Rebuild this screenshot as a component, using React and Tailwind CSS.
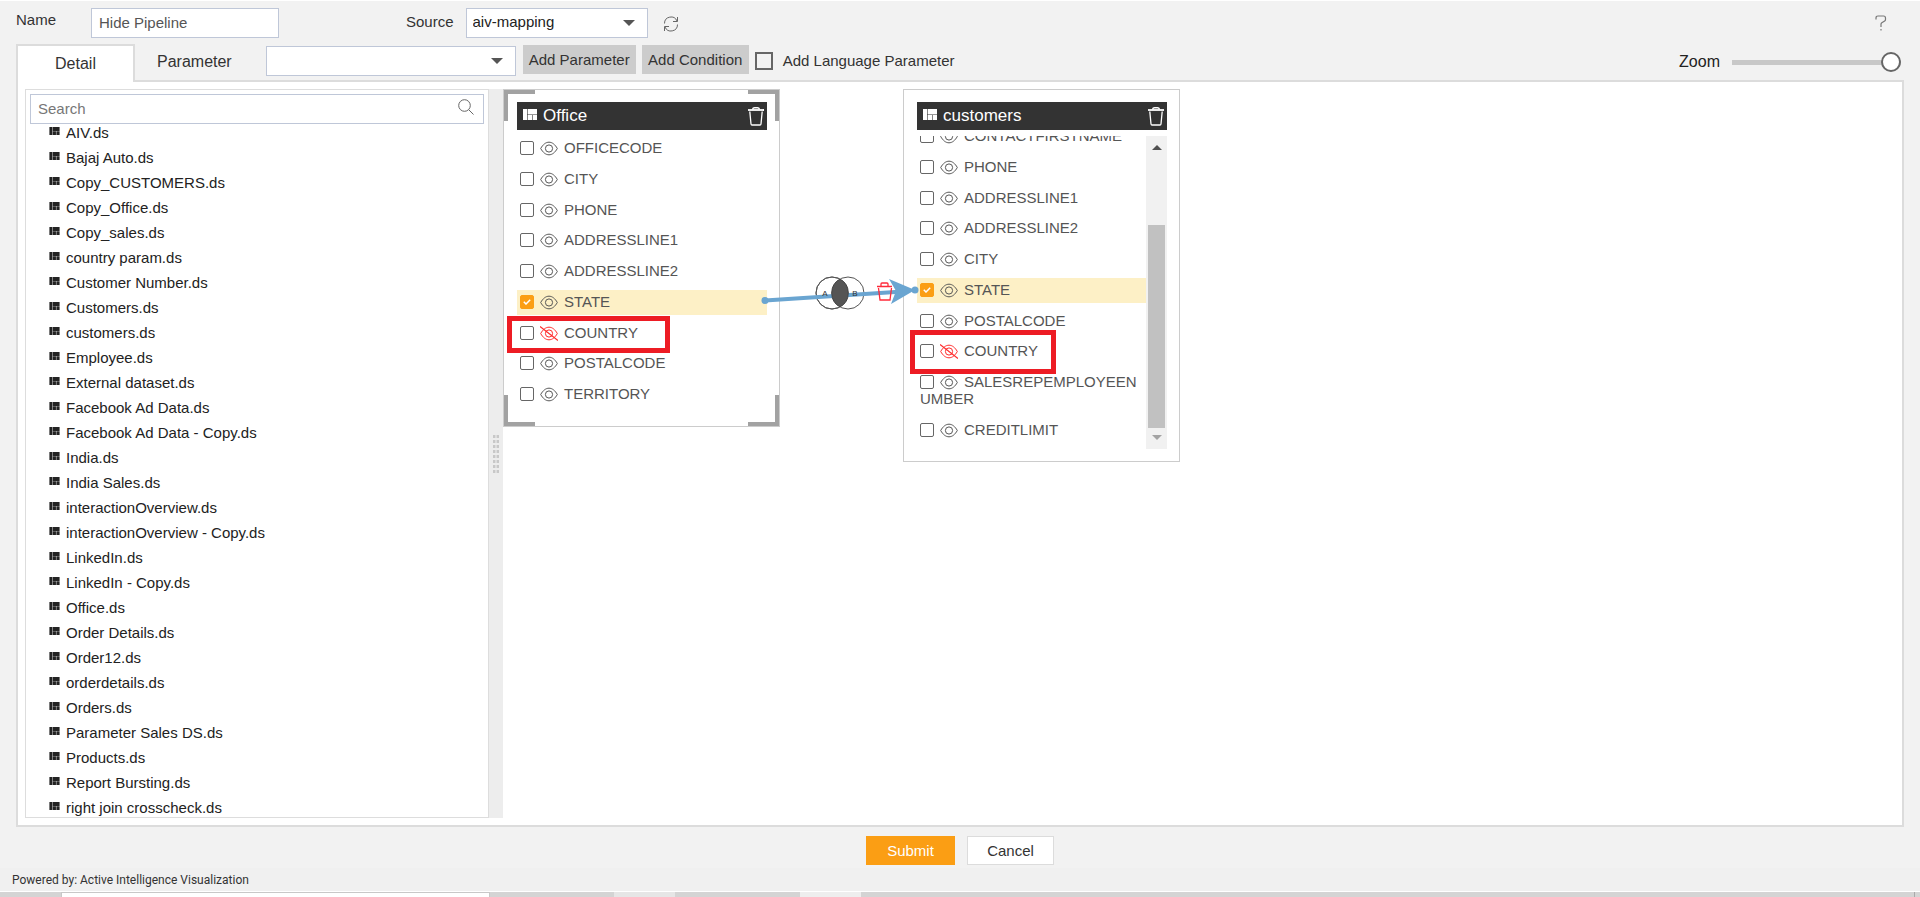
import { useState } from 'react';

const DATASETS = [
  'AIV.ds', 'Bajaj Auto.ds', 'Copy_CUSTOMERS.ds', 'Copy_Office.ds', 'Copy_sales.ds',
  'country param.ds', 'Customer Number.ds', 'Customers.ds', 'customers.ds', 'Employee.ds',
  'External dataset.ds', 'Facebook Ad Data.ds', 'Facebook Ad Data - Copy.ds', 'India.ds',
  'India Sales.ds', 'interactionOverview.ds', 'interactionOverview - Copy.ds', 'LinkedIn.ds',
  'LinkedIn - Copy.ds', 'Office.ds', 'Order Details.ds', 'Order12.ds', 'orderdetails.ds',
  'Orders.ds', 'Parameter Sales DS.ds', 'Products.ds', 'Report Bursting.ds',
  'right join crosscheck.ds',
];

const OFFICE_FIELDS = [
  { name: 'OFFICECODE' },
  { name: 'CITY' },
  { name: 'PHONE' },
  { name: 'ADDRESSLINE1' },
  { name: 'ADDRESSLINE2' },
  { name: 'STATE', joined: true },
  { name: 'COUNTRY', hidden: true },
  { name: 'POSTALCODE' },
  { name: 'TERRITORY' },
];

const CUSTOMER_FIELDS = [
  { name: 'CONTACTFIRSTNAME' },
  { name: 'PHONE' },
  { name: 'ADDRESSLINE1' },
  { name: 'ADDRESSLINE2' },
  { name: 'CITY' },
  { name: 'STATE', joined: true },
  { name: 'POSTALCODE' },
  { name: 'COUNTRY', hidden: true },
  { name: 'SALESREPEMPLOYEENUMBER' },
  { name: 'CREDITLIMIT' },
];

/* ---------- Icons ---------- */

function DatasetIcon({ className }) {
  return (
    <svg viewBox="0 0 14 11" className={className} fill="currentColor" aria-hidden="true">
      <path d="M0 0h4v11H0zM4.600 0H14v5.400H4.600zM4.600 6h4.400v5H4.600zM9.600 6H14v5H9.600z" />
    </svg>
  );
}

function TrashIcon({ className }) {
  return (
    <svg viewBox="0 0 16 19" className={className} fill="none" stroke="currentColor" aria-hidden="true">
      <path d="M0 3h16" strokeWidth="1.8" />
      <path d="M4.500 2.500Q5 .8 6.500.8h3q1.500 0 2 1.700" strokeWidth="1.5" />
      <path d="M1.800 4.500 3 17q.1 1 1 1h8q.9 0 1-1l1.200-12.500" strokeWidth="1.3" />
    </svg>
  );
}

function EyeIcon({ off }) {
  return (
    <svg
      viewBox="0 0 18 15"
      className={`inline-block w-[18px] h-[15px] ml-[6px] mr-[6px] align-[-3px] ${off ? 'text-[#ff2a2a]' : 'text-[#555]'}`}
      fill="none"
      stroke="currentColor"
      aria-hidden="true"
    >
      <path d="M.7 7.500C3 3.400 5.800 1.200 9 1.200s6 2.200 8.300 6.300c-2.300 4.100-5.100 6.300-8.300 6.300S3 11.600.7 7.500z" />
      <circle cx="9" cy="7.500" r="3.600" />
      {off && <path d="M0 .5l18 14" strokeWidth="1.200" />}
    </svg>
  );
}

function Caret({ className }) {
  return (
    <svg viewBox="0 0 12 6" className={className} fill="currentColor" aria-hidden="true">
      <path d="M0 0h12L6 6z" />
    </svg>
  );
}

/* ---------- Form bits ---------- */

function SelectBox({ label, options, className }) {
  return (
    <div className={`relative h-[30px] ${className}`}>
      <select
        aria-label={label}
        className="w-full h-full px-[6px] appearance-none bg-white border border-[#bfc7d8] text-[15px] text-[#222] outline-none"
      >
        {options.map((o) => <option key={o}>{o}</option>)}
      </select>
      <Caret className="absolute right-[13px] top-3 w-3 h-[6px] text-[#555] pointer-events-none" />
    </div>
  );
}

function FieldRow({ field }) {
  const [checked, setChecked] = useState(Boolean(field.joined));

  return (
    <li className={`pl-[3px] pt-[3px] pb-[5px] break-all ${field.joined ? 'bg-[#fdf0c6]' : ''}`}>
      <label className="block">
        <span className="inline-grid place-items-center align-[-2px]">
          <input
            type="checkbox"
            checked={checked}
            onChange={(e) => setChecked(e.target.checked)}
            className="col-start-1 row-start-1 w-[14px] h-[14px] appearance-none bg-white border border-[#666] rounded-[2px] checked:bg-[#fb9e14] checked:border-[#fb9e14]"
          />
          {checked && (
            <svg viewBox="0 0 8 6" className="col-start-1 row-start-1 w-2 h-[6px] pointer-events-none" fill="none" stroke="#fff" strokeWidth="1.500" aria-hidden="true">
              <path d="M.8 2.800 3 5l4.200-4.200" />
            </svg>
          )}
        </span>
        <EyeIcon off={field.hidden} />
        {field.name}
      </label>
    </li>
  );
}

function NodeHeader({ title }) {
  return (
    <div className="flex items-center h-7 pl-[6px] pr-[3px] bg-[#333] text-white">
      <DatasetIcon className="w-[14px] h-[11px] mb-1" />
      <h2 className="flex-1 ml-[6px] text-[17px]">{title}</h2>
      <button type="button" aria-label={`Remove ${title}`}>
        <TrashIcon className="w-4 h-[19px]" />
      </button>
    </div>
  );
}

/* ---------- Canvas ---------- */

function OfficeNode() {
  return (
    <section className="absolute left-0 top-0 w-[277px] pl-[13px] pr-3 pt-3 pb-[19px] bg-white border border-[#ccc]">
      {/* Selection corners */}
      <div className="absolute left-0 top-0 w-[31px] h-[31px] border-l-4 border-t-4 border-[#a2a2a2] pointer-events-none" />
      <div className="absolute right-0 top-0 w-[31px] h-[31px] border-r-4 border-t-4 border-[#a2a2a2] pointer-events-none" />
      <div className="absolute left-0 bottom-0 w-[31px] h-[31px] border-l-4 border-b-4 border-[#a2a2a2] pointer-events-none" />
      <div className="absolute right-0 bottom-0 w-[31px] h-[31px] border-r-4 border-b-4 border-[#a2a2a2] pointer-events-none" />

      <NodeHeader title="Office" />
      <ul className="flex flex-col justify-between h-[271px] mt-[6px] text-[15px] leading-[17px] text-[#555]">
        {OFFICE_FIELDS.map((f) => <FieldRow key={f.name} field={f} />)}
      </ul>
    </section>
  );
}

function CustomersNode() {
  return (
    <section className="absolute left-[400px] top-0 w-[277px] pl-[13px] pr-3 pt-3 pb-3 bg-white border border-[#ccc]">
      <NodeHeader title="customers" />
      <div className="flex h-[313px] mt-[6px] overflow-hidden">
        <ul className="flex-1 flex flex-col justify-between h-[319px] -mt-3 text-[15px] leading-[17px] text-[#555]">
          {CUSTOMER_FIELDS.map((f) => <FieldRow key={f.name} field={f} />)}
        </ul>
        {/* Scrollbar */}
        <div className="flex flex-col items-center w-[21px] py-[9px] bg-[#f1f1f1]">
          <Caret className="w-[10px] h-[5px] rotate-180 text-[#505050]" />
          <div className="w-[17px] h-[203px] mt-auto mb-[7px] bg-[#c1c1c1]" />
          <Caret className="w-[10px] h-[5px] text-[#a3a3a3]" />
        </div>
      </div>
    </section>
  );
}

function JoinLink() {
  return (
    <svg viewBox="0 0 420 230" className="absolute left-0 top-0 w-[420px] h-[230px] pointer-events-none">
      <g fill="none" stroke="#555">
        <circle cx="329" cy="204" r="16" fill="#fff" />
        <circle cx="345" cy="204" r="16" fill="#fff" />
        <circle cx="329" cy="204" r="16" />
      </g>
      <path d="M262 211.500 400 202.500" stroke="#6aa5d1" strokeWidth="4" />
      <path d="M337 190a16 16 0 0 1 0 28a16 16 0 0 1 0-28z" fill="#555" stroke="#444" />
      <g fontFamily="Liberation Sans, sans-serif" fontSize="8" fill="#333" textAnchor="middle">
        <text x="322" y="207">A</text>
        <text x="352" y="207">B</text>
      </g>
      <g fill="none" stroke="#ff2a3a" strokeWidth="1.300">
        <path d="M374 197.500h15M378 197v-2q0-1 1-1h5q1 0 1 1v2M375.500 199l1.500 12h10l1.500-12" />
      </g>
      <g fill="#6aa5d1">
        <circle cx="262" cy="211.500" r="3.500" />
        <path d="M386 190 412 201 388 215 393 202z" />
        <circle cx="412" cy="201" r="3.500" />
      </g>
    </svg>
  );
}

/* ---------- Page ---------- */

export default function App() {
  const [name, setName] = useState('Hide Pipeline');
  const [search, setSearch] = useState('');
  const [zoom, setZoom] = useState(100);

  const visible = DATASETS.filter((d) => d.toLowerCase().includes(search.toLowerCase()));

  return (
    <div className="flex flex-col h-screen bg-[#f2f2f2] border-t border-white font-['Liberation_Sans',Arial,sans-serif] text-[15px] text-[#333]">
      {/* Top bar */}
      <header className="flex items-center h-[43px] px-4">
        <label htmlFor="name" className="w-[75px] pb-1">Name</label>
        <input
          id="name"
          value={name}
          onChange={(e) => setName(e.target.value)}
          className="w-[188px] h-[30px] px-[7px] bg-white border border-[#bfc7d8] text-[#555] outline-none"
        />
        <span className="ml-[127px] mr-3">Source</span>
        <SelectBox label="Source" options={['aiv-mapping']} className="w-[182px]" />
        <button type="button" aria-label="Refresh" className="ml-[15px] mt-[2px] text-[#666]">
          <svg viewBox="0 0 16 16" className="w-4 h-4" fill="none" stroke="currentColor" aria-hidden="true">
            <path d="M1.500 7.500A6.500 6.500 0 0 1 14 5M14.500 8.500A6.500 6.500 0 0 1 2 11M14.500 1v4.500H10M1.500 15v-4.500H6" />
          </svg>
        </button>
        <button type="button" aria-label="Help" className="ml-auto mr-[17px] text-[#777]">
          <svg viewBox="0 0 12 16" className="w-3 h-4" fill="none" stroke="currentColor" strokeWidth="1.200" aria-hidden="true">
            <path d="M1 4.500V3q0-2 2-2h5.500q2 0 2 2v1.500q0 1-.8 1.500L6.800 7.800Q6 8.300 6 9.300V12M6 14v1.500" />
          </svg>
        </button>
      </header>

      {/* Tabs and parameter tools */}
      <div className="flex items-start h-9 px-4">
        <button
          type="button"
          className="relative z-10 w-[119px] h-[38px] bg-white border-2 border-b-0 border-[#dcdcdc] text-base"
        >
          Detail
        </button>
        <button type="button" className="h-9 px-[22px] text-base">Parameter</button>
        <SelectBox label="Parameter list" options={['']} className="w-[250px] mt-[2px] ml-3" />
        <button type="button" className="w-[113px] h-[29px] mt-[1px] ml-[7px] pt-[1px] bg-[#ccc]">Add Parameter</button>
        <button type="button" className="w-[107px] h-[29px] mt-[1px] ml-[6px] pt-[1px] bg-[#ccc]">Add Condition</button>
        <label className="flex items-center gap-[10px] h-[34px] ml-[6px]">
          <input type="checkbox" className="w-[18px] h-[18px] appearance-none border-2 border-[#666] checked:bg-[#666]" />
          Add Language Parameter
        </label>
        <label className="flex items-center gap-3 h-9 ml-auto mr-[3px] text-base text-[#222]">
          Zoom
          <input
            type="range"
            min="10"
            max="100"
            value={zoom}
            onChange={(e) => setZoom(Number(e.target.value))}
            className="w-[169px] h-5 appearance-none bg-transparent [&::-webkit-slider-runnable-track]:h-[5px] [&::-webkit-slider-runnable-track]:bg-[#c8c8c8] [&::-webkit-slider-thumb]:appearance-none [&::-webkit-slider-thumb]:w-5 [&::-webkit-slider-thumb]:h-5 [&::-webkit-slider-thumb]:-mt-2 [&::-webkit-slider-thumb]:rounded-full [&::-webkit-slider-thumb]:bg-white [&::-webkit-slider-thumb]:border-2 [&::-webkit-slider-thumb]:border-[#666]"
          />
        </label>
      </div>

      <main className="flex flex-1 min-h-0 mx-4 p-[7px] bg-white border-2 border-[#dcdcdc]">
        {/* Dataset list */}
        <aside className="flex flex-col w-[464px] px-1 pt-1 border border-[#ddd]">
          <div className="relative">
            <input
              type="text"
              aria-label="Search"
              placeholder="Search"
              value={search}
              onChange={(e) => setSearch(e.target.value)}
              className="block w-full h-[30px] px-[7px] pb-[1px] border border-[#bfc7d8] placeholder-[#777] outline-none"
            />
            <svg viewBox="0 0 16 16" className="absolute right-[10px] top-[5px] w-4 h-4 text-[#666]" fill="none" stroke="currentColor" aria-hidden="true">
              <circle cx="6.500" cy="6.500" r="5.800" />
              <path d="M10.800 10.800 15.500 15.500" />
            </svg>
          </div>
          <ul className="flex-1 min-h-0 overflow-hidden pl-[19px] text-[#222]">
            {visible.map((d) => (
              <li key={d} className="flex items-start gap-[6px] h-[25px] leading-[18px]">
                <DatasetIcon className="w-[11px] h-2 mt-[3px]" />
                {d}
              </li>
            ))}
          </ul>
        </aside>

        {/* Splitter */}
        <div className="flex flex-col items-center justify-center gap-[2px] w-[14px] bg-[#ededed] cursor-col-resize">
          {[0, 1, 2, 3, 4, 5, 6, 7].map((i) => (
            <div key={i} className="w-[6px] h-[3px] border-x-2 border-[#c8c8c8] bg-[#ddd]" />
          ))}
        </div>

        <div className="relative flex-1 overflow-hidden">
          <OfficeNode />
          <CustomersNode />
          <JoinLink />
          {/* Callouts round the hidden columns */}
          <div className="absolute left-1 top-[227px] w-[163px] h-[37px] border-5 border-[#ed1c24] pointer-events-none" />
          <div className="absolute left-[407px] top-[241px] w-[146px] h-11 border-5 border-[#ed1c24] pointer-events-none" />
        </div>
      </main>

      <div className="flex justify-center gap-3 pt-[9px] pb-[3px]">
        <button type="button" className="w-[89px] h-[29px] pt-[2px] bg-[#fb9e14] text-white">Submit</button>
        <button type="button" className="w-[87px] h-[29px] pt-[2px] bg-white border border-[#dcdcdc]">Cancel</button>
      </div>

      <footer className="h-6 px-3 bg-[#f0f0f0] border-b border-white font-[Roboto,sans-serif] text-[12px] leading-6">
        Powered by: Active Intelligence Visualization
      </footer>

      {/* Edge of the page behind */}
      <div className="flex h-[5px] shrink-0 bg-[#d4d4d4]">
        <div className="w-[429px] ml-[61px] bg-white border-t border-x border-[#c8c8c8]" />
        <div className="w-[61px] ml-[124px] bg-[#e6e6e6]" />
        <div className="w-[61px] ml-[125px] bg-[#eee]" />
        <div className="w-px ml-auto mr-[5px] bg-[#aaa]" />
      </div>
    </div>
  );
}
